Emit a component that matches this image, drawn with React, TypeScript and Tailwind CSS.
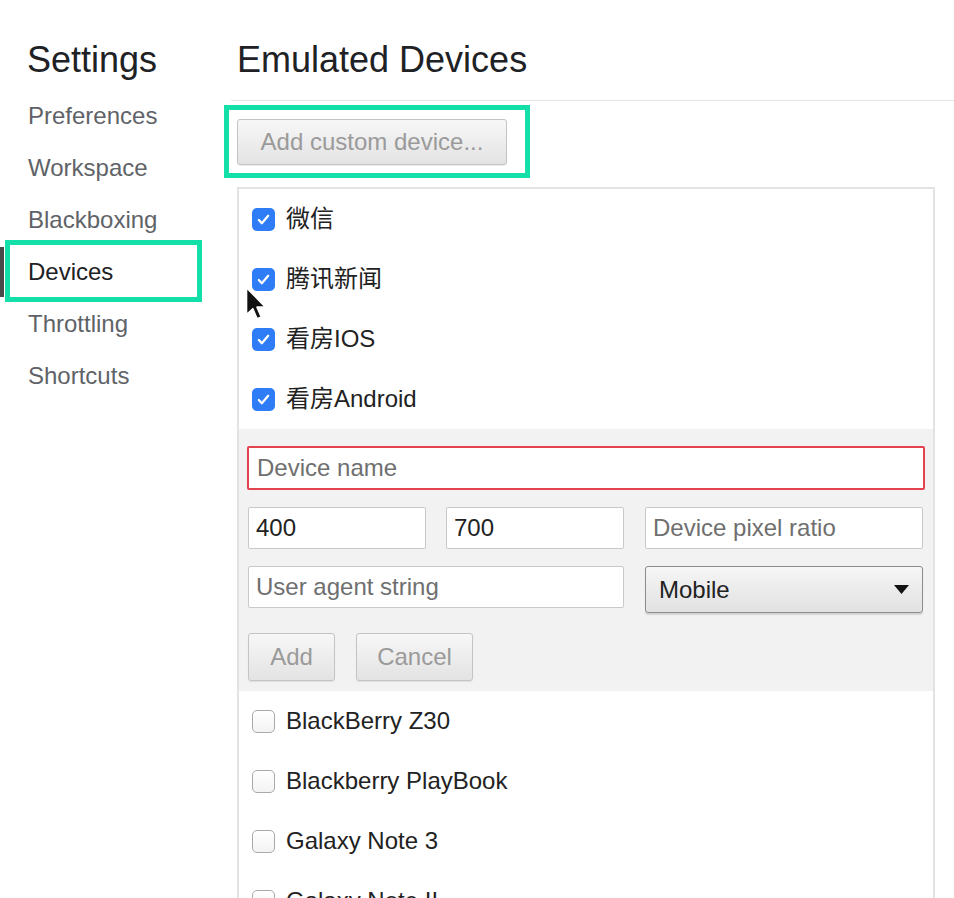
const checked = ['微信', '腾讯新闻', '看房IOS', '看房Android']
const unchecked = ['BlackBerry Z30', 'Blackberry PlayBook', 'Galaxy Note 3', 'Galaxy Note II']
const nav = ['Preferences', 'Workspace', 'Blackboxing', 'Devices', 'Throttling', 'Shortcuts']

function CheckBox({ on }: { on: boolean }) {
  if (on) {
    return (
      <span className="flex h-[23px] w-[23px] shrink-0 items-center justify-center rounded-[5px] bg-[#2f7df6]">
        <svg width="15" height="15" viewBox="0 0 16 16" fill="none">
          <path d="M3 8.5l3.2 3.5L13 4" stroke="white" strokeWidth="2.4" strokeLinecap="round" strokeLinejoin="round" />
        </svg>
      </span>
    )
  }
  return (
    <span className="h-[23px] w-[23px] shrink-0 rounded-[5px] border border-[#a9a9a9] bg-gradient-to-b from-white to-[#f3f3f3]" />
  )
}

function Row({ label, on }: { label: string; on: boolean }) {
  return (
    <div className="flex h-[60px] items-center gap-[11px] pl-[13px] text-[24px] text-[#222]">
      <CheckBox on={on} />
      <span>{label}</span>
    </div>
  )
}

function Field({ text, value, w }: { text: string; value?: boolean; w: string }) {
  return (
    <div
      className={`flex h-[42px] items-center rounded-[2px] border border-[#c9c9c9] bg-white pl-[7px] text-[24px] ${w} ${
        value ? 'text-[#222]' : 'text-[#6f6f6f]'
      }`}
    >
      {text}
    </div>
  )
}

function GrayButton({ label, w }: { label: string; w: string }) {
  return (
    <div
      className={`flex h-[48px] items-center justify-center rounded-[3px] border border-[#c4c4c4] bg-gradient-to-b from-[#f7f7f7] to-[#e3e3e3] text-[24px] text-[#9a9a9a] shadow-[0_1px_1px_rgba(0,0,0,0.08)] ${w}`}
    >
      {label}
    </div>
  )
}

export default function App() {
  return (
    <div className="relative flex h-[898px] w-[954px] overflow-hidden bg-white font-['Liberation_Sans','Noto_Sans_CJK_SC',sans-serif]">
      <aside className="w-[231px] shrink-0">
        <div className="h-[90px] pl-[27px] pt-[40px] text-[36px] leading-[40px] text-[#202124]">Settings</div>
        {nav.map((item) => (
          <div
            key={item}
            className={`relative h-[52px] pl-[28px] text-[24px] leading-[52px] ${
              item === 'Devices' ? 'text-[#202124]' : 'text-[#5f6368]'
            }`}
          >
            {item === 'Devices' && (
              <>
                <span className="absolute left-0 top-[1px] h-[50px] w-[4px] bg-[#4a4a4a]" />
                <span className="absolute left-[5px] top-[-6px] h-[62px] w-[197px] border-[5px] border-[#13e0a9]" />
              </>
            )}
            {item}
          </div>
        ))}
      </aside>

      <main className="flex-1">
        <div className="h-[101px] border-b border-[#e6e6e6] pl-[6px] pt-[40px]">
          <h1 className="text-[36px] leading-[40px] text-[#202124]">Emulated Devices</h1>
        </div>

        <div className="pl-[6px] pt-[18px]">
          <div className="relative w-[270px]">
            <span className="absolute left-[-13px] top-[-14px] h-[73px] w-[306px] border-[5px] border-[#13e0a9]" />
            <GrayButton label="Add custom device..." w="w-[270px] !h-[46px]" />
          </div>

          <div className="mt-[22px] w-[698px] border-2 border-b-0 border-[#e3e3e3]">
            {checked.map((c) => (
              <Row key={c} label={c} on />
            ))}

            <div className="flex h-[262px] flex-col gap-[17px] bg-[#f2f2f2] pl-[8px] pr-[8px] pt-[17px]">
              <div className="flex h-[44px] items-center rounded-[2px] border-2 border-[#e2434f] bg-white pl-[8px] text-[24px] text-[#6f6f6f]">
                Device name
              </div>
              <div className="flex gap-[20px] pl-[1px]">
                <Field text="400" value w="w-[178px]" />
                <Field text="700" value w="w-[178px]" />
                <div className="pl-[1px]">
                  <Field text="Device pixel ratio" w="w-[278px]" />
                </div>
              </div>
              <div className="flex gap-[21px] pl-[1px]">
                <Field text="User agent string" w="w-[376px]" />
                <div className="flex h-[47px] w-[278px] items-center justify-between rounded-[3px] border border-[#8c8c8c] bg-gradient-to-b from-[#f6f6f6] to-[#e1e1e1] pl-[13px] pr-[13px] text-[24px] text-[#222] shadow-[0_2px_1px_rgba(0,0,0,0.12)]">
                  <span>Mobile</span>
                  <svg width="15" height="9" viewBox="0 0 15 9">
                    <path d="M0 0h15L7.5 9z" fill="#111" />
                  </svg>
                </div>
              </div>
              <div className="flex gap-[21px] pl-[1px] pt-[3px]">
                <GrayButton label="Add" w="w-[87px]" />
                <GrayButton label="Cancel" w="w-[117px]" />
              </div>
            </div>

            {unchecked.map((c) => (
              <Row key={c} label={c} on={false} />
            ))}
          </div>
        </div>
      </main>

      <svg className="absolute left-[244px] top-[286px]" width="24" height="36" viewBox="0 0 22 34">
        <path
          d="M2 1.5 L2 27 L8 21.5 L12 31 L16 29.3 L12 20 L20 20 Z"
          fill="#111"
          stroke="white"
          strokeWidth="1.6"
          strokeLinejoin="round"
        />
      </svg>
    </div>
  )
}
